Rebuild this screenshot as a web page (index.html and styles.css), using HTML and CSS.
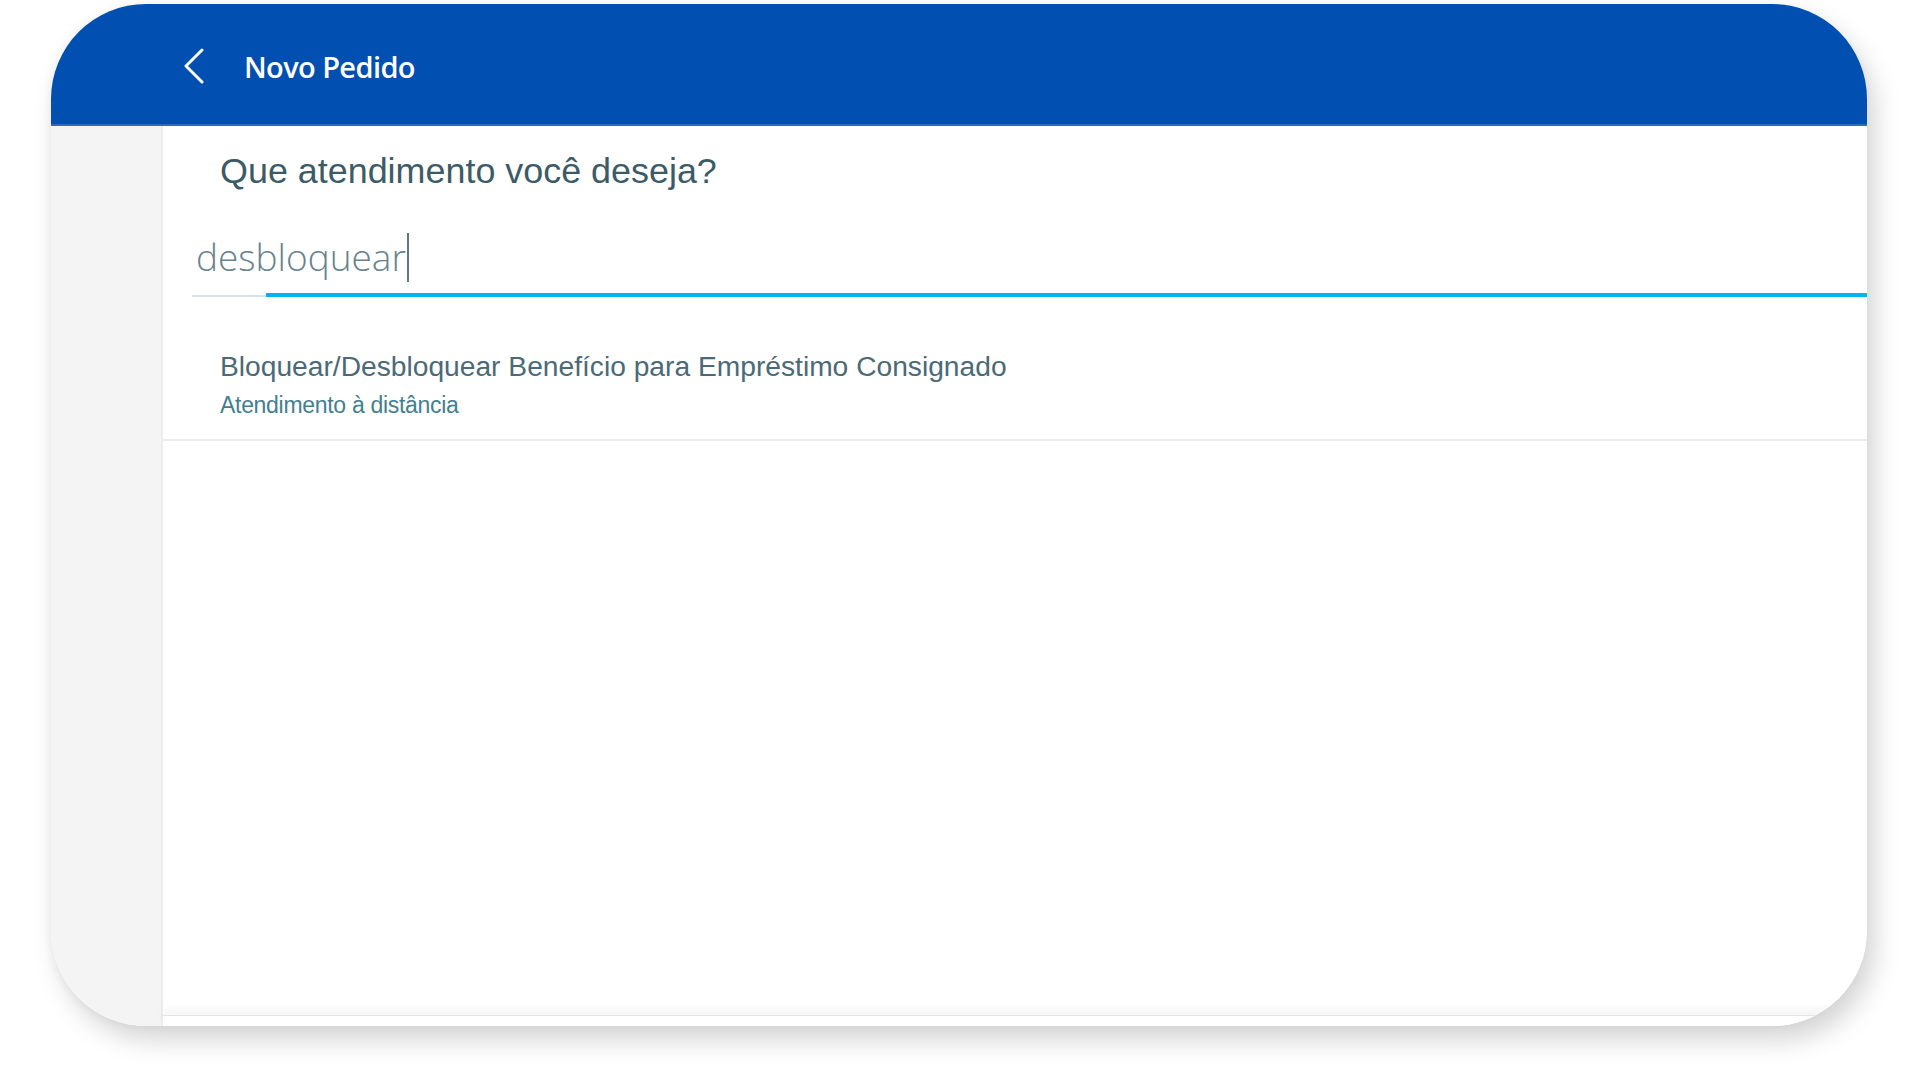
FILE: index.html
```html
<!DOCTYPE html>
<html lang="pt-BR">
<head>
<meta charset="utf-8">
<title>Novo Pedido</title>
<link rel="stylesheet" href="styles.css">
</head>
<body>
<div class="stage">
  <div class="card">
    <header class="topbar">
      <span class="back" aria-label="Voltar">
        <svg width="24" height="36" viewBox="0 0 24 36"><path d="M20 2 L4 18 L20 34" fill="none" stroke="#ffffff" stroke-width="3" stroke-linecap="round" stroke-linejoin="round"/></svg>
      </span>
      <h1 class="title">Novo Pedido</h1>
    </header>
    <div class="body">
      <aside class="sidebar"></aside>
      <main class="main">
        <h2 class="question">Que atendimento você deseja?</h2>
        <div class="field">
          <div class="field-text">desbloquear<span class="cursor"></span></div>
          <div class="underline"><span class="u-gray"></span><span class="u-blue"></span></div>
        </div>
        <div class="result">
          <div class="result-title">Bloquear/Desbloquear Benefício para Empréstimo Consignado</div>
          <div class="result-sub">Atendimento à distância</div>
        </div>
        <div class="spacer"></div>
        <div class="bottom-bar"></div>
      </main>
    </div>
  </div>
</div>
</body>
</html>
```

FILE: styles.css
```css
* { box-sizing: border-box; }
html, body { margin: 0; padding: 0; background: #ffffff; }
body { width: 1920px; height: 1080px; overflow: hidden; font-family: "Liberation Sans", Arial, sans-serif; }

.stage { padding: 4px 0 0 51px; }

.card {
  width: 1816px;
  height: 1022px;
  border-radius: 95px;
  overflow: hidden;
  background: #ffffff;
  display: flex;
  flex-direction: column;
  box-shadow: 8px 14px 26px rgba(0, 0, 0, 0.17), -2px 0 10px rgba(0, 0, 0, 0.04);
}

.topbar {
  height: 122px;
  flex: 0 0 122px;
  background: #004fb1;
  border-bottom: 2px solid #2a6cc0;
  display: flex;
  align-items: center;
  padding: 4px 0 0 131px;
}
.back { display: flex; width: 24px; height: 36px; }
.title {
  margin: 0 0 0 38px;
  font-family: "Open Sans", "Liberation Sans", sans-serif;
  font-weight: 600;
  font-size: 29px;
  letter-spacing: -0.6px;
  color: #ffffff;
}

.body { flex: 1; display: flex; min-height: 0; }
.sidebar {
  width: 112px;
  flex: 0 0 112px;
  background: #f4f4f4;
  border-right: 2px solid #ececec;
}
.main { flex: 1; display: flex; flex-direction: column; }

.question {
  margin: 23px 0 0 57px;
  font-weight: 400;
  font-size: 35.9px;
  line-height: 44px;
  color: #3c5b67;
}

.field { margin: 0 0 0 29px; padding-top: 39px; }
.field-text {
  padding-left: 4px;
  font-family: "Open Sans", "Liberation Sans", sans-serif;
  font-weight: 300;
  font-size: 37px;
  line-height: 50px;
  height: 50px;
  color: #67838c;
  display: flex;
  align-items: center;
}
.cursor { display: inline-block; width: 2px; height: 49px; background: #5b7a84; margin-left: 1px; }
.underline { display: flex; align-items: flex-end; height: 5px; margin-top: 10px; }
.u-gray { width: 74px; height: 2px; background: #d6e3e7; }
.u-blue { flex: 1; height: 4px; background: #00b5ef; }

.result {
  padding: 52px 0 20px 57px;
  border-bottom: 2px solid #e8ecee;
}
.result-title { font-size: 28.2px; line-height: 34px; color: #4b6a77; }
.result-sub { margin-top: 8px; font-size: 23px; line-height: 28px; color: #42808f; letter-spacing: -0.3px; }

.spacer { flex: 1; }
.bottom-bar {
  height: 11px;
  flex: 0 0 11px;
  border-top: 1px solid #e4e4e4;
  background: #ffffff;
  box-shadow: 0 -6px 10px rgba(0, 0, 0, 0.045);
}
```
